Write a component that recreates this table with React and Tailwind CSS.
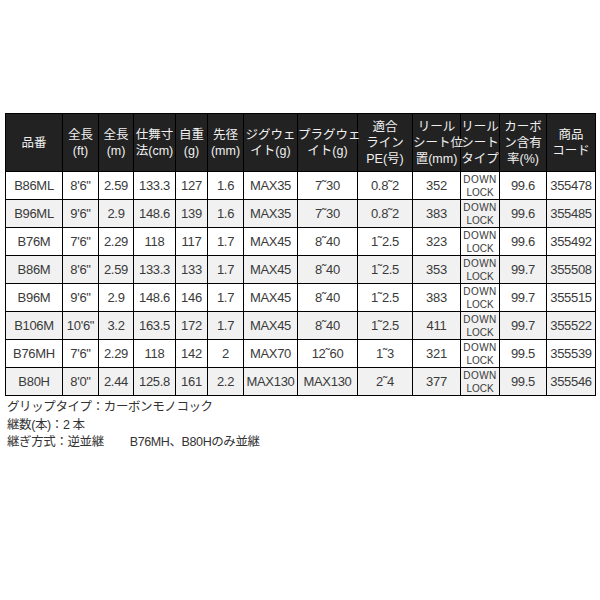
const headers = [
  ["品番"],
  ["全長", "(ft)"],
  ["全長", "(m)"],
  ["仕舞寸", "法(cm)"],
  ["自重", "(g)"],
  ["先径", "(mm)"],
  ["ジグウェ", "イト(g)"],
  ["プラグウェ", "イト(g)"],
  ["適合", "ライン", "PE(号)"],
  ["リール", "シート位", "置(mm)"],
  ["リール", "シート", "タイプ"],
  ["カーボ", "ン含有", "率(%)"],
  ["商品", "コード"],
];

const widths = [57, 36, 35, 42, 32, 36, 54, 60, 55, 48, 39, 47, 49];

const rows = [
  ["B86ML", "8'6\"", "2.59", "133.3", "127", "1.6", "MAX35", "7˜30", "0.8˜2", "352", "99.6", "355478"],
  ["B96ML", "9'6\"", "2.9", "148.6", "139", "1.6", "MAX35", "7˜30", "0.8˜2", "383", "99.6", "355485"],
  ["B76M", "7'6\"", "2.29", "118", "117", "1.7", "MAX45", "8˜40", "1˜2.5", "323", "99.6", "355492"],
  ["B86M", "8'6\"", "2.59", "133.3", "133", "1.7", "MAX45", "8˜40", "1˜2.5", "353", "99.7", "355508"],
  ["B96M", "9'6\"", "2.9", "148.6", "146", "1.7", "MAX45", "8˜40", "1˜2.5", "383", "99.7", "355515"],
  ["B106M", "10'6\"", "3.2", "163.5", "172", "1.7", "MAX45", "8˜40", "1˜2.5", "411", "99.7", "355522"],
  ["B76MH", "7'6\"", "2.29", "118", "142", "2", "MAX70", "12˜60", "1˜3", "321", "99.5", "355539"],
  ["B80H", "8'0\"", "2.44", "125.8", "161", "2.2", "MAX130", "MAX130", "2˜4", "377", "99.5", "355546"],
];

const font = { fontFamily: '"Liberation Sans", "Noto Sans CJK JP", sans-serif' };

const cell = "border border-black p-0 text-center text-[13px] text-[#3a3a3a] whitespace-nowrap tracking-[-0.3px]";

const App = () => {
  return (
    <div className="w-[600px] h-[600px] bg-white pt-[113px] pl-[5px]" style={font}>
      <table className="table-fixed border-collapse w-[590px]">
        <colgroup>
          {widths.map((w, i) => (
            <col key={i} style={{ width: w }} />
          ))}
        </colgroup>
        <thead>
          <tr className="h-[58px] bg-[#222222]">
            {headers.map((h, i) => (
              <th
                key={i}
                className="border border-black p-0 text-[12.5px] leading-[16px] font-normal text-[#f0f0f0] text-center"
              >
                {h.map((line, j) => (
                  <div key={j} className="whitespace-nowrap">{line}</div>
                ))}
              </th>
            ))}
          </tr>
        </thead>
        <tbody>
          {rows.map((r, i) => (
            <tr key={i} className={"h-[28px] " + (i % 2 === 1 ? "bg-[#f1f1f1]" : "bg-white")}>
              {r.slice(0, 10).map((c, j) => (
                <td key={j} className={cell}>
                  {c}
                </td>
              ))}
              <td className="border border-black p-0 text-center text-[10px] leading-[13px] text-[#3a3a3a]">
                <div className="tracking-[0.5px]">DOWN</div>
                <div>LOCK</div>
              </td>
              {r.slice(10).map((c, j) => (
                <td key={j} className={cell}>
                  {c}
                </td>
              ))}
            </tr>
          ))}
        </tbody>
      </table>
      <div className="pt-[3px] pl-[2px] text-[12.5px] leading-[17.5px] tracking-[-0.4px] text-[#333]">
        <div>グリップタイプ：カーボンモノコック</div>
        <div>継数(本)：2 本</div>
        <div>
          継ぎ方式：逆並継<span className="pl-[26px]">B76MH、B80Hのみ並継</span>
        </div>
      </div>
    </div>
  );
};

export default App;
